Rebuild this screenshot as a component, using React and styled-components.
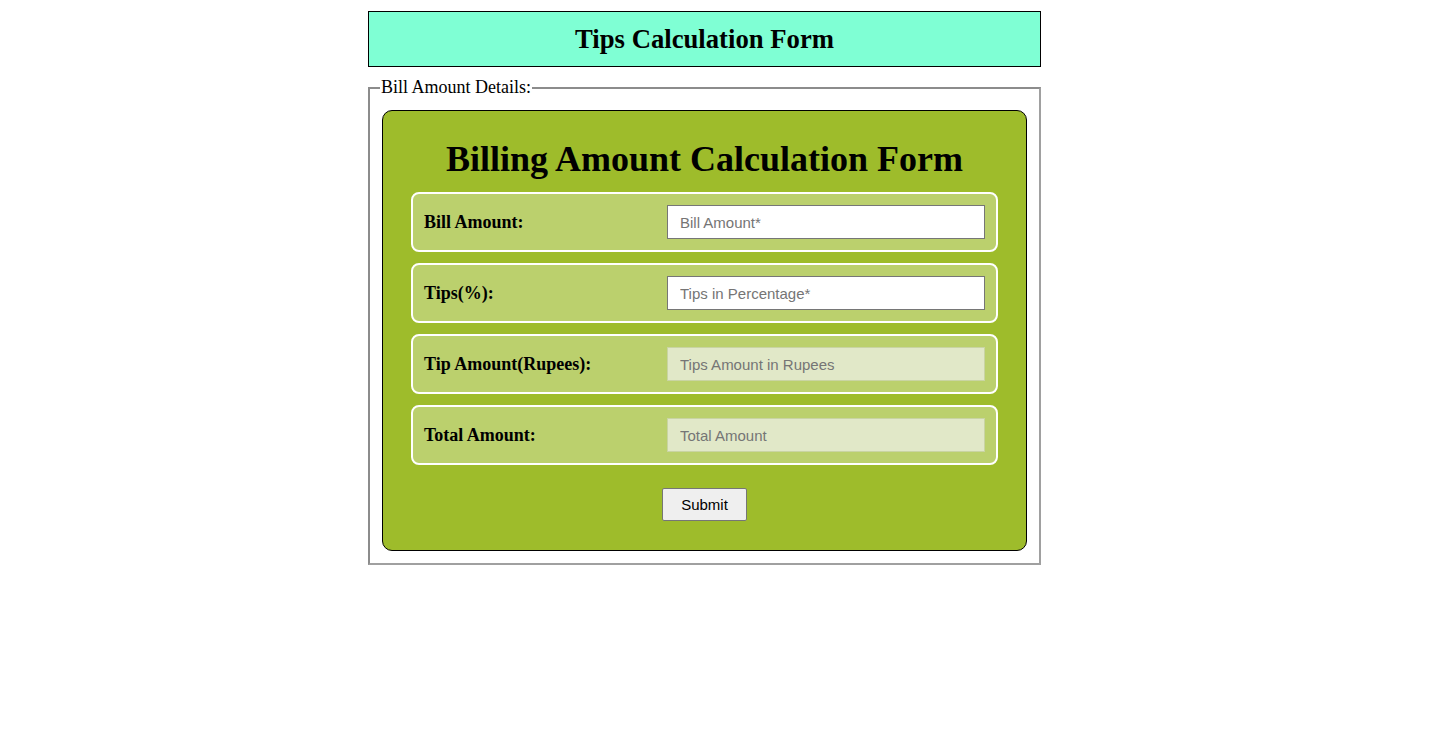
import React from "react";
import styled, { createGlobalStyle } from "styled-components";

const Global = createGlobalStyle`
  html, body { margin: 0; padding: 0; background: #fff; }
  body { font-family: "Liberation Serif", "Times New Roman", serif; }
`;

const Page = styled.div`
  width: 673px;
  margin: 11px 0 0 368px;
  display: flex;
  flex-direction: column;
  gap: 10px;
`;

const Header = styled.header`
  box-sizing: border-box;
  height: 56px;
  background: #7fffd4;
  border: 1px solid #000;
  display: flex;
  align-items: center;
  justify-content: center;
`;

const HeaderTitle = styled.h2`
  margin: 0;
  font-size: 26.7px;
  font-weight: bold;
  font-family: "Liberation Serif", "Times New Roman", serif;
`;

const Fieldset = styled.fieldset`
  margin: 0;
  padding: 12px 12px 12px;
  border-style: solid;
  border-width: 2px;
  border-color: #8c8c8c #a0a0a0 #a0a0a0 #8c8c8c;
`;

const Legend = styled.legend`
  padding: 0 1px;
  margin-left: -2px;
  font-size: 18px;
  font-family: "Liberation Serif", "Times New Roman", serif;
`;

const Card = styled.form`
  background: #9ebc2b;
  border: 1px solid #000;
  border-radius: 10px;
  padding: 26px 28px 29px;
  display: flex;
  flex-direction: column;
  gap: 11px;
`;

const CardTitle = styled.h1`
  margin: 0;
  text-align: center;
  font-size: 36px;
  line-height: 44px;
  font-weight: bold;
  font-family: "Liberation Serif", "Times New Roman", serif;
`;

const Row = styled.div`
  border: 2px solid #fff;
  border-radius: 8px;
  background: #bbd06d;
  padding: 11px 11px 11px 11px;
  display: flex;
  align-items: center;
`;

const Label = styled.label`
  flex: 1;
  font-weight: bold;
  font-size: 18px;
  font-family: "Liberation Serif", "Times New Roman", serif;
`;

const Input = styled.input`
  box-sizing: border-box;
  width: 318px;
  height: 34px;
  padding: 0 12px;
  font-size: 15px;
  font-family: "Liberation Sans", Arial, sans-serif;
  border: 1px solid ${(p) => (p.disabled ? "#c9d4a3" : "#767676")};
  background: ${(p) => (p.disabled ? "#e1e8c8" : "#fff")};
  outline: none;
  &::placeholder { color: #757575; }
`;

const ButtonRow = styled.div`
  display: flex;
  justify-content: center;
  padding-top: 12px;
`;

const Button = styled.button`
  width: 85px;
  height: 33px;
  font-size: 15px;
  font-family: "Liberation Sans", Arial, sans-serif;
  background: #efefef;
  border: 1px solid #767676;
  border-radius: 2px;
  color: #000;
`;

const fields = [
  { label: "Bill Amount:", ph: "Bill Amount*" },
  { label: "Tips(%):", ph: "Tips in Percentage*" },
  { label: "Tip Amount(Rupees):", ph: "Tips Amount in Rupees", disabled: true },
  { label: "Total Amount:", ph: "Total Amount", disabled: true },
];

export default function App() {
  return (
    <>
      <Global />
      <Page>
        <Header>
          <HeaderTitle>Tips Calculation Form</HeaderTitle>
        </Header>
        <Fieldset>
          <Legend>Bill Amount Details:</Legend>
          <Card onSubmit={(e) => e.preventDefault()}>
            <CardTitle>Billing Amount Calculation Form</CardTitle>
            {fields.map((f) => (
              <Row key={f.label}>
                <Label>{f.label}</Label>
                <Input placeholder={f.ph} disabled={f.disabled} />
              </Row>
            ))}
            <ButtonRow>
              <Button type="submit">Submit</Button>
            </ButtonRow>
          </Card>
        </Fieldset>
      </Page>
    </>
  );
}
